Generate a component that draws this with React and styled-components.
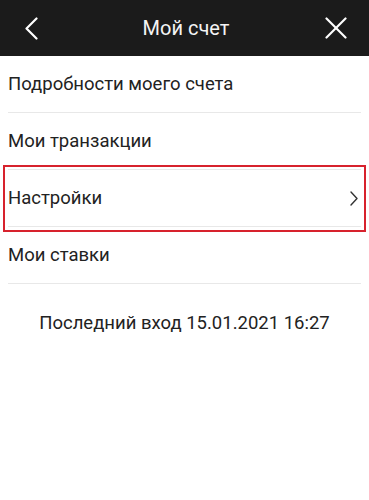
import styled, { createGlobalStyle } from 'styled-components';

const Global = createGlobalStyle`
  html, body { margin: 0; padding: 0; background: #fff; }
  body { font-family: Roboto, "Noto Sans", sans-serif; }
`;

const Page = styled.div`
  width: 369px;
  min-height: 500px;
  background: #fff;
`;

const Header = styled.header`
  height: 56px;
  background: #1b1b1b;
  display: flex;
  align-items: center;
  justify-content: space-between;
  padding: 0 22px 0 25px;
  box-sizing: border-box;
  color: #fff;
`;

const Title = styled.h1`
  margin: 0;
  font-size: 20px;
  font-weight: 400;
  color: #f4f4f4;
`;

const IconButton = styled.button`
  background: none;
  border: 0;
  padding: 0;
  width: 22px;
  height: 22px;
  display: flex;
  align-items: center;
  justify-content: ${p => p.$align || 'center'};
  color: #fff;
  cursor: pointer;
`;

const List = styled.nav`
  display: flex;
  flex-direction: column;
`;

const Row = styled.a`
  display: flex;
  align-items: center;
  justify-content: space-between;
  height: 56px;
  margin: 0 8px;
  padding-right: 3px;
  border-bottom: 1px solid #e8e8e8;
  font-size: 18.5px;
  color: #222;
  text-decoration: none;
  outline: ${p => p.$selected ? '2px solid #d7222d' : 'none'};
  outline-offset: ${p => p.$selected ? '3px' : '0'};
`;

const LastLogin = styled.p`
  margin: 28px 0 0;
  text-align: center;
  font-size: 18.5px;
  color: #222;
`;

const items = [
  { label: 'Подробности моего счета' },
  { label: 'Мои транзакции' },
  { label: 'Настройки', selected: true },
  { label: 'Мои ставки' },
];

export default function App() {
  return (
    <Page>
      <Global />
      <Header>
        <IconButton $align="flex-start" aria-label="Назад">
          <svg width="13" height="23" viewBox="0 0 13 23" fill="none" stroke="currentColor" strokeWidth="2.2" strokeLinecap="round" strokeLinejoin="round">
            <polyline points="11.5 1.5 1.5 11.5 11.5 21.5" />
          </svg>
        </IconButton>
        <Title>Мой счет</Title>
        <IconButton aria-label="Закрыть">
          <svg width="22" height="22" viewBox="0 0 22 22" fill="none" stroke="currentColor" strokeWidth="2.2" strokeLinecap="round">
            <line x1="1.5" y1="1.5" x2="20.5" y2="20.5" />
            <line x1="20.5" y1="1.5" x2="1.5" y2="20.5" />
          </svg>
        </IconButton>
      </Header>
      <List>
        {items.map(item => (
          <Row key={item.label} href="#" $selected={item.selected}>
            {item.label}
            {item.selected && (
              <svg width="8" height="15" viewBox="0 0 8 15" fill="none" stroke="#333" strokeWidth="1.4" strokeLinecap="round" strokeLinejoin="round">
                <polyline points="1 1 7 7.5 1 14" />
              </svg>
            )}
          </Row>
        ))}
      </List>
      <LastLogin>Последний вход 15.01.2021 16:27</LastLogin>
    </Page>
  );
}
